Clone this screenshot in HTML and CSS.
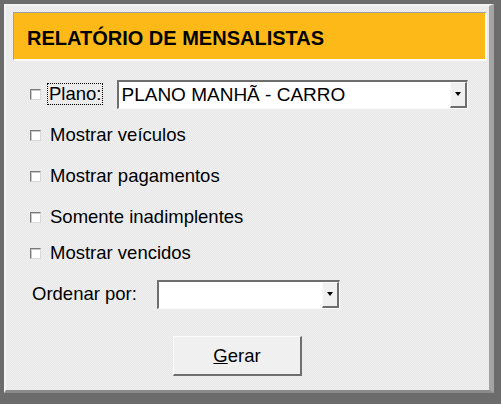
FILE: index.html
```html
<!DOCTYPE html>
<html lang="pt">

<head>
    <meta charset="UTF-8">
    <meta name="viewport" content="width=device-width, initial-scale=1.0">
    <title>Relatório de Mensalistas</title>
    <link rel="stylesheet" href="styles.css">
</head>

<body>
    <div class="panel">
        <div class="header">RELATÓRIO DE MENSALISTAS</div>

        <div class="row row-plano">
            <span class="check"></span>
            <span class="label focus">Plano:</span>
            <div class="combo combo-plano">
                <span class="combo-text">PLANO MANHÃ - CARRO</span>
                <span class="combo-btn"><span class="arrow"></span></span>
            </div>
        </div>
        <div class="row row-veiculos">
            <span class="check"></span>
            <span class="label">Mostrar veículos</span>
        </div>
        <div class="row row-pagamentos">
            <span class="check"></span>
            <span class="label">Mostrar pagamentos</span>
        </div>
        <div class="row row-inad">
            <span class="check"></span>
            <span class="label">Somente inadimplentes</span>
        </div>
        <div class="row row-venc">
            <span class="check"></span>
            <span class="label">Mostrar vencidos</span>
        </div>

        <div class="row row-ordem">
            <span class="label">Ordenar por:</span>
            <div class="combo combo-ordem">
                <span class="combo-text"></span>
                <span class="combo-btn"><span class="arrow"></span></span>
            </div>
        </div>

        <div class="actions">
            <button class="btn"><u>G</u>erar</button>
        </div>
    </div>
</body>

</html>
```

FILE: styles.css
```css
* {
    margin: 0;
    padding: 0;
    box-sizing: border-box;
}

body {
    background: #6c6c6c;
    font-family: "Liberation Sans", Arial, sans-serif;
    color: #000;
    width: 501px;
    height: 404px;
    overflow: hidden;
}

.panel {
    margin: 4px 0 0 4px;
    width: 490px;
    height: 389px;
    border-top: 2px solid #f4f4f4;
    border-left: 2px solid #f4f4f4;
    border-right: 5px solid #a4a4a4;
    border-bottom: 3px solid #8a8a8a;
    background-color: #ececec;
    background-image: repeating-conic-gradient(#e6e6e6 0 25%, #f1f1f1 0 50%);
    background-size: 2px 2px;
    padding: 6px 0 0 7px;
}

.header {
    width: 474px;
    height: 49px;
    background: #fcb918;
    border-top: 1px solid #a0a0a0;
    border-left: 1px solid #a0a0a0;
    border-right: 2px solid #fafafa;
    border-bottom: 2px solid #fafafa;
    font-weight: bold;
    font-size: 20px;
    padding: 14px 0 0 13px;
    line-height: 22px;
}

.row {
    display: flex;
    align-items: center;
    height: 24px;
    padding-left: 17px;
    font-size: 18.5px;
}

.row-plano {
    height: 30px;
    margin-top: 18px;
}

.row-veiculos {
    margin-top: 14px;
}

.row-pagamentos {
    margin-top: 17px;
}

.row-inad {
    margin-top: 17px;
}

.row-venc {
    margin-top: 12px;
}

.row-ordem {
    margin-top: 14px;
    height: 30px;
    padding-left: 19px;
}

.check {
    width: 11px;
    height: 11px;
    background: #fff;
    border-top: 1px solid #7a7a7a;
    border-left: 1px solid #7a7a7a;
    border-right: 1px solid #d8d8d8;
    border-bottom: 1px solid #d8d8d8;
    box-shadow: inset 1px 1px 0 #c8c8c8;
    margin-right: 9px;
    flex: none;
}

.label {
    line-height: 20px;
    white-space: nowrap;
}

.focus {
    outline: 1px dotted #000;
    padding: 0 1px;
    margin-left: -2px;
}

.combo {
    display: flex;
    background: #fff;
    border-top: 2px solid #6e6e6e;
    border-left: 2px solid #6e6e6e;
    border-right: 1px solid #fafafa;
    border-bottom: 1px solid #fafafa;
    height: 29px;
    flex: none;
}

.combo-plano {
    width: 351px;
    margin-left: 15px;
}

.combo-ordem {
    width: 183px;
    margin-left: 20px;
}

.combo-text {
    flex: 1;
    font-size: 19px;
    line-height: 25px;
    padding-left: 2px;
    white-space: nowrap;
}

.combo-btn {
    width: 17px;
    background: #f0f0f0;
    border-top: 1px solid #fafafa;
    border-left: 1px solid #fafafa;
    border-right: 2px solid #6e6e6e;
    border-bottom: 2px solid #6e6e6e;
    display: flex;
    align-items: center;
    justify-content: center;
}

.arrow {
    width: 0;
    height: 0;
    border-left: 3px solid transparent;
    border-right: 3px solid transparent;
    border-top: 4px solid #000;
}

.actions {
    margin-top: 27px;
    padding-left: 160px;
}

.btn {
    width: 129px;
    height: 40px;
    background: #f0f0f0;
    border-top: 1px solid #fafafa;
    border-left: 1px solid #fafafa;
    border-right: 2px solid #6e6e6e;
    border-bottom: 2px solid #6e6e6e;
    font-family: "Liberation Sans", Arial, sans-serif;
    font-size: 18.5px;
    color: #000;
}
```
